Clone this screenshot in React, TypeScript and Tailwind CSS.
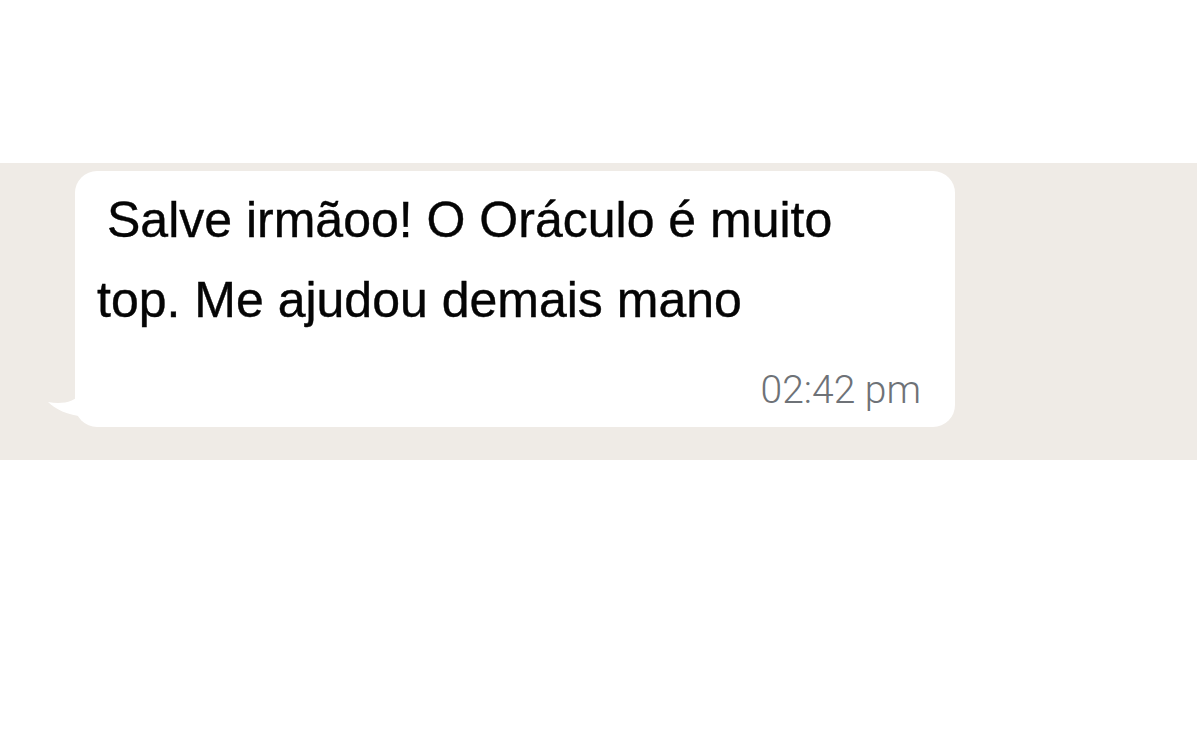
import React from "react";

export default function App() {
  return (
    <div className="w-[1200px] h-[750px] bg-white pt-[163px]" style={{ fontFamily: '"Liberation Sans", Arial, sans-serif' }}>
      <div className="h-[297px] w-[1197px] bg-[#efebe6] pt-[8px] pl-[75px]">
        <div className="relative w-[880px] h-[256px] bg-white rounded-[22px] pl-[22px] pt-[9px]">
          <svg className="absolute left-[-30px] top-[218px]" width="40" height="30" viewBox="0 0 40 30">
            <path d="M40 0 L 34 6 C 30 12 18 16 3 13 C 10 20 22 26 40 28 Z" fill="#ffffff" />
          </svg>
          <div className="text-[50px] leading-[80px] text-[#050505] [-webkit-text-stroke:0.4px_#050505]">
            <div className="pl-[10px]">Salve irmãoo! O Oráculo é muito</div>
            <div>top. Me ajudou demais mano</div>
          </div>
          <div
            className="absolute right-[34px] top-[197px] text-[39px] leading-[44px] font-light text-[#6e7277]"
            style={{ fontFamily: 'Roboto, "Liberation Sans", sans-serif' }}
          >
            02:42 pm
          </div>
        </div>
      </div>
    </div>
  );
}
